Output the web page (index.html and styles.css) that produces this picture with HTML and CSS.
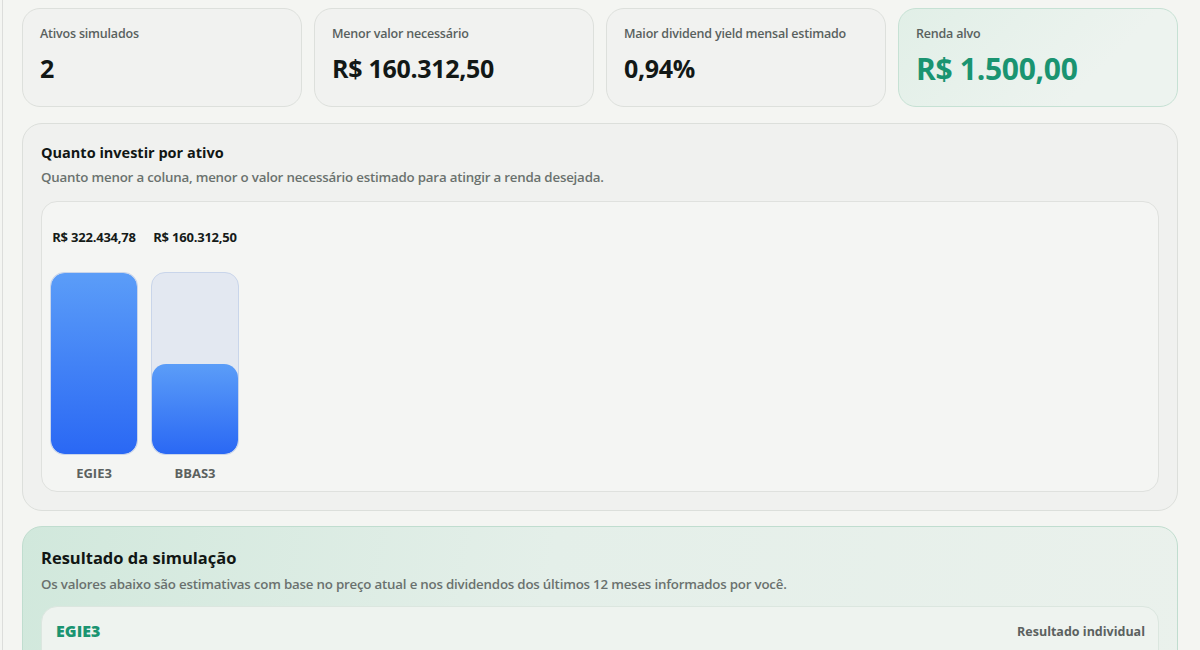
FILE: index.html
```html
<!DOCTYPE html>
<html>
<head>
    <title>Simulador de renda</title>
    <link rel="stylesheet" href="styles.css">
</head>
<body>
    <div class="page">
        <div class="stats">
            <div class="stat">
                <div class="stat-label">Ativos simulados</div>
                <div class="stat-value">2</div>
            </div>
            <div class="stat">
                <div class="stat-label">Menor valor necessário</div>
                <div class="stat-value">R$ 160.312,50</div>
            </div>
            <div class="stat">
                <div class="stat-label">Maior dividend yield mensal estimado</div>
                <div class="stat-value">0,94%</div>
            </div>
            <div class="stat stat-target">
                <div class="stat-label">Renda alvo</div>
                <div class="stat-value">R$ 1.500,00</div>
            </div>
        </div>

        <div class="panel">
            <h2>Quanto investir por ativo</h2>
            <p class="sub">Quanto menor a coluna, menor o valor necessário estimado para atingir a renda desejada.</p>
            <div class="chart">
                <div class="col">
                    <div class="col-value">R$ 322.434,78</div>
                    <div class="track">
                        <div class="fill" style="height: 100%"></div>
                    </div>
                    <div class="col-name">EGIE3</div>
                </div>
                <div class="col">
                    <div class="col-value">R$ 160.312,50</div>
                    <div class="track">
                        <div class="fill" style="height: 49.7%"></div>
                    </div>
                    <div class="col-name">BBAS3</div>
                </div>
            </div>
        </div>

        <div class="panel panel-result">
            <h2>Resultado da simulação</h2>
            <p class="sub">Os valores abaixo são estimativas com base no preço atual e nos dividendos dos últimos 12 meses informados por você.</p>
            <div class="result-card">
                <div class="result-head">
                    <span class="ticker">EGIE3</span>
                    <span class="result-tag">Resultado individual</span>
                </div>
            </div>
        </div>
    </div>
</body>
</html>
```

FILE: styles.css
```css
html {
    background-color: #f4f5f2;
}

body {
    margin: 0;
    font-family: "Open Sans", "Noto Sans", sans-serif;
    color: #121816;
    overflow: hidden;
}

.page {
    margin-left: 2px;
    border-left: 1px solid #dcdddb;
    padding: 8px 22px 0 19px;
    min-height: 650px;
    box-sizing: border-box;
}

.stats {
    display: grid;
    grid-template-columns: repeat(4, 1fr);
    gap: 12px;
    margin-bottom: 16px;
}

.stat {
    background-color: #f1f2f0;
    border: 1px solid #dde0dc;
    border-radius: 18px;
    height: 99px;
    box-sizing: border-box;
    padding: 16px 17px;
}

.stat-label {
    font-size: 12.5px;
    font-weight: 600;
    color: #59615e;
    letter-spacing: -0.2px;
}

.stat-value {
    font-size: 25px;
    font-weight: 700;
    margin-top: 9px;
    letter-spacing: -0.3px;
}

.stat-target {
    background: linear-gradient(135deg, #e1efe7 0%, #edf3ef 70%);
    border-color: #c6e1d4;
}

.stat-target .stat-value {
    color: #1a9471;
    font-size: 30px;
    margin-top: 6px;
}

.panel {
    background-color: #f0f1ef;
    border: 1px solid #dcdfdb;
    border-radius: 20px;
    padding: 19px 18px 18px 18px;
    margin-bottom: 15px;
}

.panel h2 {
    font-size: 14.5px;
    font-weight: 700;
    margin: 0;
    color: #111614;
}

.sub {
    font-size: 13.3px;
    font-weight: 600;
    color: #6a716e;
    margin: 6px 0 0;
    letter-spacing: -0.2px;
}

.chart {
    margin-top: 15px;
    background-color: #f4f5f3;
    border: 1px solid #dfe1de;
    border-radius: 16px;
    height: 291px;
    box-sizing: border-box;
    padding: 26px 8px 0;
    display: flex;
    gap: 13px;
}

.col {
    width: 88px;
    display: flex;
    flex-direction: column;
    align-items: center;
}

.col-value {
    font-size: 13px;
    font-weight: 700;
    white-space: nowrap;
    color: #151a18;
    letter-spacing: -0.2px;
}

.track {
    width: 88px;
    height: 183px;
    margin-top: 26px;
    background-color: #e3e8f1;
    border: 1px solid #c9d5ea;
    border-radius: 14px;
    box-sizing: border-box;
    display: flex;
    align-items: flex-end;
    overflow: hidden;
}

.fill {
    width: 100%;
    background: linear-gradient(180deg, #5b9df8 0%, #2a68f4 100%);
    border-radius: 14px;
}

.col-name {
    margin-top: 9px;
    font-size: 13px;
    font-weight: 700;
    color: #5b615f;
}

.panel-result {
    background: linear-gradient(100deg, #d1e8dc 0%, #e4efe9 45%, #eaf1ec 100%);
    border-color: #c0ddcf;
    padding-top: 19px;
}

.panel-result h2 {
    font-size: 16.5px;
}

.panel-result .sub {
    margin-top: 6px;
}

.result-card {
    margin-top: 13px;
    background-color: #eef3ef;
    border: 1px solid #dbe6df;
    border-radius: 16px;
    padding: 13px 13px 16px 14px;
    height: 80px;
}

.result-head {
    display: flex;
    justify-content: space-between;
    align-items: center;
}

.ticker {
    font-size: 16px;
    font-weight: 800;
    color: #1a9471;
}

.result-tag {
    font-size: 12.5px;
    font-weight: 700;
    color: #5b615f;
}
```
